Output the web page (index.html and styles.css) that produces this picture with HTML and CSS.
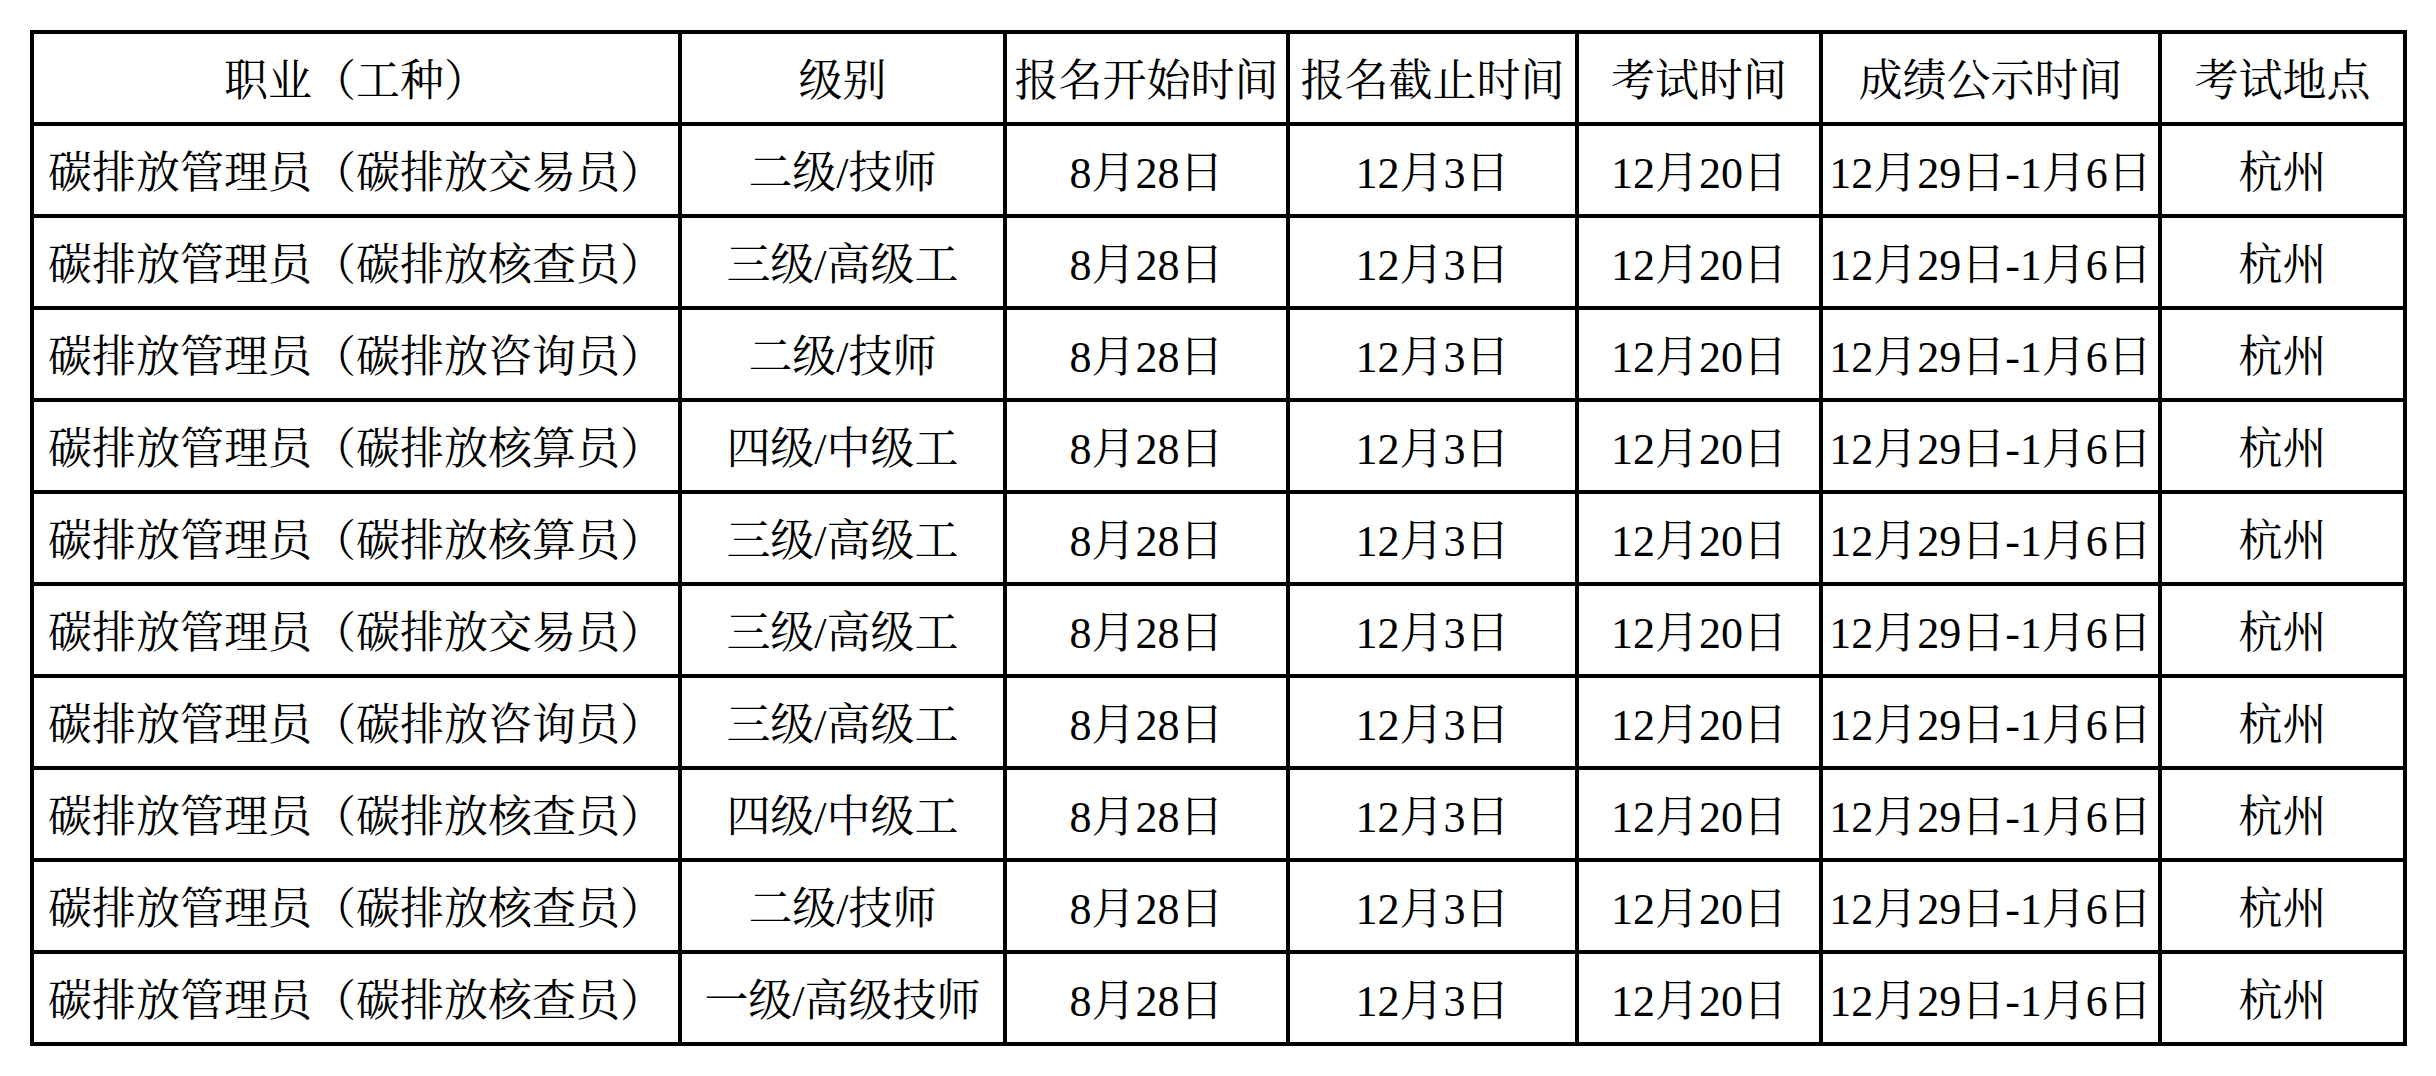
FILE: index.html
```html
<!DOCTYPE html>
<html lang="zh-CN">
<head>
<meta charset="utf-8">
<title>碳排放管理员考试安排</title>
<link rel="stylesheet" href="styles.css">
</head>
<body>
<table class="schedule">
  <colgroup>
    <col class="c-job">
    <col class="c-level">
    <col class="c-start">
    <col class="c-end">
    <col class="c-exam">
    <col class="c-result">
    <col class="c-place">
  </colgroup>
  <thead>
    <tr>
      <th>职业（工种）</th>
      <th>级别</th>
      <th>报名开始时间</th>
      <th>报名截止时间</th>
      <th>考试时间</th>
      <th>成绩公示时间</th>
      <th>考试地点</th>
    </tr>
  </thead>
  <tbody>
    <tr><td class="job">碳排放管理员（碳排放交易员）</td><td>二级/技师</td><td>8月28日</td><td>12月3日</td><td>12月20日</td><td>12月29日-1月6日</td><td>杭州</td></tr>
    <tr><td class="job">碳排放管理员（碳排放核查员）</td><td>三级/高级工</td><td>8月28日</td><td>12月3日</td><td>12月20日</td><td>12月29日-1月6日</td><td>杭州</td></tr>
    <tr><td class="job">碳排放管理员（碳排放咨询员）</td><td>二级/技师</td><td>8月28日</td><td>12月3日</td><td>12月20日</td><td>12月29日-1月6日</td><td>杭州</td></tr>
    <tr><td class="job">碳排放管理员（碳排放核算员）</td><td>四级/中级工</td><td>8月28日</td><td>12月3日</td><td>12月20日</td><td>12月29日-1月6日</td><td>杭州</td></tr>
    <tr><td class="job">碳排放管理员（碳排放核算员）</td><td>三级/高级工</td><td>8月28日</td><td>12月3日</td><td>12月20日</td><td>12月29日-1月6日</td><td>杭州</td></tr>
    <tr><td class="job">碳排放管理员（碳排放交易员）</td><td>三级/高级工</td><td>8月28日</td><td>12月3日</td><td>12月20日</td><td>12月29日-1月6日</td><td>杭州</td></tr>
    <tr><td class="job">碳排放管理员（碳排放咨询员）</td><td>三级/高级工</td><td>8月28日</td><td>12月3日</td><td>12月20日</td><td>12月29日-1月6日</td><td>杭州</td></tr>
    <tr><td class="job">碳排放管理员（碳排放核查员）</td><td>四级/中级工</td><td>8月28日</td><td>12月3日</td><td>12月20日</td><td>12月29日-1月6日</td><td>杭州</td></tr>
    <tr><td class="job">碳排放管理员（碳排放核查员）</td><td>二级/技师</td><td>8月28日</td><td>12月3日</td><td>12月20日</td><td>12月29日-1月6日</td><td>杭州</td></tr>
    <tr><td class="job">碳排放管理员（碳排放核查员）</td><td>一级/高级技师</td><td>8月28日</td><td>12月3日</td><td>12月20日</td><td>12月29日-1月6日</td><td>杭州</td></tr>
  </tbody>
</table>
</body>
</html>
```

FILE: styles.css
```css
html, body {
  margin: 0;
  padding: 0;
  background: #ffffff;
}

body {
  padding: 30px 0 0 30px;
}

.schedule {
  border-collapse: collapse;
  table-layout: fixed;
  width: 2377px;
  font-family: "Liberation Serif", "Noto Serif CJK SC", "Noto Sans CJK SC", serif;
  font-size: 44px;
  color: #000;
}

.schedule th,
.schedule td {
  border: 4px solid #000;
  height: 80px;
  padding: 8px 0 0 0;
  text-align: center;
  vertical-align: middle;
  font-weight: normal;
  white-space: nowrap;
  line-height: 1;
}

.c-job { width: 648px; }
.c-level { width: 325px; }
.c-start { width: 283px; }
.c-end { width: 289px; }
.c-exam { width: 244px; }
.c-result { width: 339px; }
.c-place { width: 245px; }
```
